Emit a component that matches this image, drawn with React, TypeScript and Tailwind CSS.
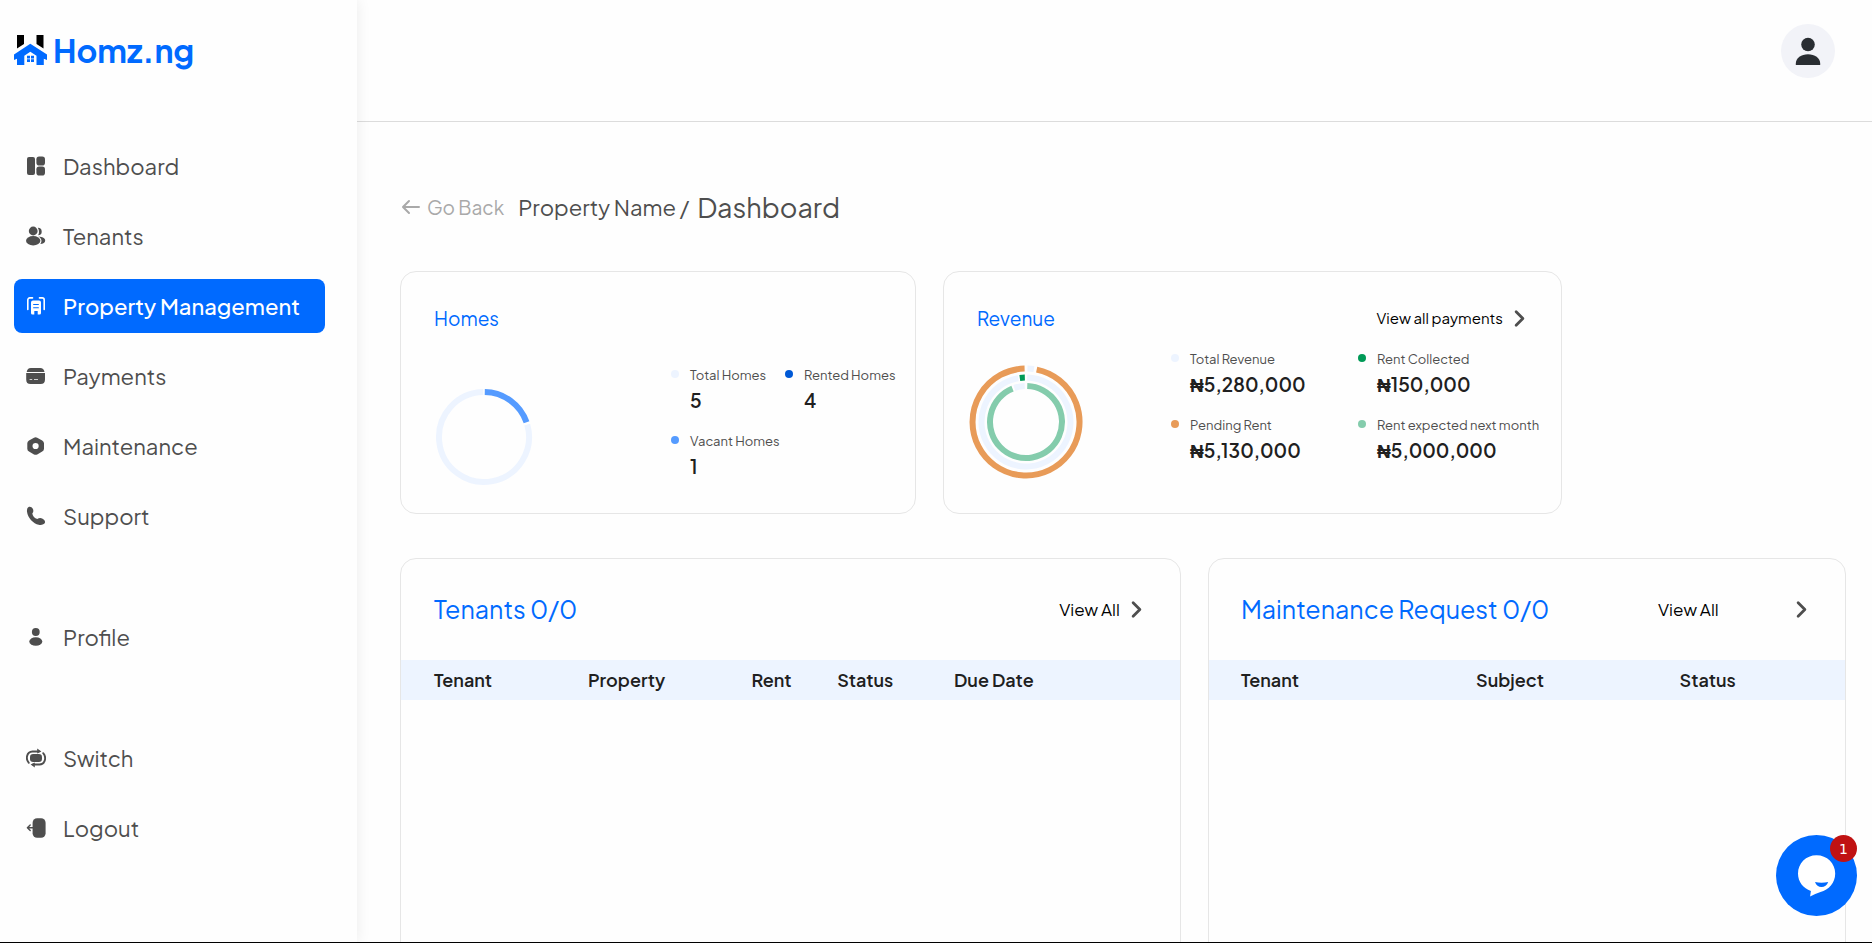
import React from 'react';
import { ChevronRight } from 'lucide-react';

type NavItem = { label: string; icon: React.ReactNode; active?: boolean };

const Icon: React.FC<{ children: React.ReactNode }> = ({ children }) => (
  <svg width="20" height="20" viewBox="0 0 20 20" fill="currentColor" aria-hidden="true" className="shrink-0">
    {children}
  </svg>
);

const mainNav: NavItem[] = [
  {
    label: 'Dashboard',
    icon: (
      <Icon>
        <rect x="1" y="1" width="8" height="18" rx="2" />
        <rect x="10.4" y="0.5" width="8.6" height="9" rx="2.8" />
        <rect x="10.4" y="10.5" width="8.6" height="9" rx="2.8" />
      </Icon>
    ),
  },
  {
    label: 'Tenants',
    icon: (
      <Icon>
        <circle cx="7.2" cy="5" r="4.4" />
        <ellipse cx="7.2" cy="14.7" rx="7.2" ry="4.7" />
        <path d="M11.8 1.8a3.7 3.7 0 1 1 .3 7.5c1.2-1.5 1.4-5-.3-7.5zM12.5 10.5c4 .2 6.700 1.700 6.700 3.900 0 2-2 3.400-5 3.600 2-2 1.800-5.500-1.700-7.500z" />
      </Icon>
    ),
  },
  {
    label: 'Property Management',
    active: true,
    icon: (
      <Icon>
        <path d="M6.500 1.900H3.800a2 2 0 0 0-2 2v9.600M13.500 1.900h2.700a2 2 0 0 1 2 2v9.600" fill="none" stroke="currentColor" strokeWidth="1.600" strokeLinecap="round" />
        <path fillRule="evenodd" d="M7 4.500h6a2 2 0 0 1 2 2V17a1.500 1.500 0 0 1-1.500 1.500h-1.800V15H8.300v3.500H6.500A1.500 1.500 0 0 1 5 17V6.500a2 2 0 0 1 2-2zM7.200 8v1.100h5.600V8zM7.200 11.200v1.100h5.600v-1.100z" />
      </Icon>
    ),
  },
  {
    label: 'Payments',
    icon: (
      <Icon>
        <path d="M4.800 2h9.400c2.400 0 3.800 1.300 4.300 3.900H.7C1.100 3.300 2.500 2 4.800 2z" />
        <path fillRule="evenodd" d="M.2 6.900h18.800v6.600c0 3-1.400 4.500-4.400 4.500h-10c-3 0-4.400-1.500-4.400-4.500zM3.600 13v.8h2.600V13zM8 13v.8h4V13z" />
      </Icon>
    ),
  },
  {
    label: 'Maintenance',
    icon: (
      <Icon>
        <path fillRule="evenodd" d="M8 1.700a3.300 3.300 0 0 1 3.200 0l5 2.800A3.300 3.300 0 0 1 18 7.300v5.500a3.300 3.300 0 0 1-1.800 2.800l-5 2.800a3.300 3.300 0 0 1-3.200 0l-5-2.800a3.300 3.300 0 0 1-1.700-2.800V7.300A3.300 3.300 0 0 1 3 4.500zM9.600 6.900a3.100 3.100 0 1 0 0 6.200 3.100 3.100 0 0 0 0-6.200z" />
      </Icon>
    ),
  },
  {
    label: 'Support',
    icon: (
      <Icon>
        <path d="M2.300 1.200c1.600-.9 3.600-.2 4.500 1.600.9 1.700.7 3.500-.5 4.600.3 2.300 2.400 4.900 5 5.700 1.500-1.200 3.500-1.400 5.300-.4 1.900 1 2.800 2.700 2.300 4-.8 1.700-3.300 2.600-6.200 2C7.500 17.600 1.700 11.900 1 5.700.8 3.700 1.200 1.900 2.300 1.200z" />
      </Icon>
    ),
  },
];

const profileNav: NavItem[] = [
  {
    label: 'Profile',
    icon: (
      <Icon>
        <circle cx="9.800" cy="5" r="3.900" />
        <ellipse cx="9.800" cy="14.500" rx="6.500" ry="4.300" />
      </Icon>
    ),
  },
];

const accountNav: NavItem[] = [
  {
    label: 'Switch',
    icon: (
      <Icon>
        <rect x="4" y="6" width="12" height="8" rx="3.200" />
        <path d="M2.800 14.800C-.4 11.500.2 3.700 6.500 3.500h6.300M17.200 5.200c3.200 3.300 2.600 11.100-3.700 11.300H7.200" fill="none" stroke="currentColor" strokeWidth="1.900" strokeLinecap="round" />
        <path d="M11.200.4l4.200 3.100-4.200 2zM8.800 19.600l-4.200-3.100 4.200-2z" />
      </Icon>
    ),
  },
  {
    label: 'Logout',
    icon: (
      <Icon>
        <rect x="6.600" y="0.200" width="13" height="19.600" rx="4.500" />
        <path d="M7 9.800H1.500M4.200 7L1.400 9.800l2.800 2.800" fill="none" stroke="currentColor" strokeWidth="1.400" strokeLinecap="round" strokeLinejoin="round" />
      </Icon>
    ),
  },
];

const Logo: React.FC = () => (
  <a href="#" className="flex items-center gap-1.5 text-[#006aff]">
    <svg width="33" height="31" viewBox="0 0 33 31" aria-hidden="true">
      <path d="M3 0h7v9l-7 4.500zM22.500 0h7v13.500l-7-4.500z" fill="#000" />
      <path
        fillRule="evenodd"
        fill="#006aff"
        d="M16.300 8.800L33 19.500v5.500l-3.200-1.200V30h-7.300v-9.300l-6.200-4-6 4V30H3v-6.200L0 25v-5.500z"
      />
      <path d="M13 20.800h3v2.600h-3zM17 20.800h3v2.600h-3zM13 24.300h3v2.700h-3zM17 24.300h3v2.700h-3z" fill="#006aff" />
    </svg>
    <span className="text-[32px] leading-[31px] font-bold">Homz.ng</span>
  </a>
);

const NavGroup: React.FC<{ items: NavItem[] }> = ({ items }) => (
  <ul className="flex flex-col gap-4">
    {items.map((item) => (
      <li key={item.label}>
        <a
          href="#"
          className={
            item.active
              ? 'flex h-[54px] items-center gap-[17px] rounded-lg bg-[#006aff] px-3 text-[22px] font-medium text-white'
              : 'flex h-[54px] items-center gap-[17px] rounded-lg px-3 text-[22px] text-[#4e4e4e]'
          }
        >
          {item.icon}
          {item.label}
        </a>
      </li>
    ))}
  </ul>
);

// Ring segment, angles are clockwise degrees from the top
const Arc: React.FC<{ c: number; r: number; from: number; to: number; color: string }> = ({ c, r, from, to, color }) => {
  const point = (deg: number) => {
    const a = ((deg - 90) * Math.PI) / 180;
    return `${(c + r * Math.cos(a)).toFixed(2)} ${(c + r * Math.sin(a)).toFixed(2)}`;
  };
  return (
    <path
      d={`M${point(from)}A${r} ${r} 0 ${to - from > 180 ? 1 : 0} 1 ${point(to)}`}
      fill="none"
      stroke={color}
      strokeWidth="6"
    />
  );
};

const Stat: React.FC<{ label: string; value: string; dot: string; naira?: boolean }> = ({ label, value, dot, naira }) => (
  <div className="flex gap-[11px]">
    <span className={`mt-1 h-2 w-2 shrink-0 rounded-full ${dot}`}></span>
    <dl>
      <dt className="text-[13px] leading-[18px] whitespace-nowrap text-[#4e4e4e]">{label}</dt>
      <dd className="mt-0.5 text-[19px] leading-7 font-semibold text-[#202020]">
        {naira && <span className="font-['Liberation_Sans',sans-serif] leading-none font-bold">₦</span>}
        {value}
      </dd>
    </dl>
  </div>
);

const headCell = 'p-0 text-left font-semibold';

const App: React.FC = () => {
  return (
    <div className="flex h-screen overflow-hidden border-b border-black bg-[#fefefe] font-['Plus_Jakarta_Sans','Inter',sans-serif]">
      <aside className="z-10 w-[357px] shrink-0 pt-[35px] pr-8 pl-[14px] shadow-[0_0_14px_rgba(0,0,0,0.08)]">
        <Logo />
        <nav className="mt-[73px] flex flex-col gap-[67px]">
          <NavGroup items={mainNav} />
          <NavGroup items={profileNav} />
          <NavGroup items={accountNav} />
        </nav>
      </aside>

      <div className="flex min-w-0 flex-1 flex-col">
        <header className="flex h-[122px] shrink-0 justify-end border-b border-[#dcdcdc] pt-6 pr-[37px]">
          <button type="button" aria-label="Account" className="h-[54px] w-[54px] rounded-full bg-[#f2f3f8]">
            <svg width="54" height="54" viewBox="0 0 54 54" fill="#292d32" aria-hidden="true">
              <circle cx="27" cy="20.500" r="6.800" />
              <path d="M14.800 41v-1.500c0-5.500 5.500-9.300 12.200-9.300s12.200 3.800 12.200 9.300V41z" />
            </svg>
          </button>
        </header>

        <main className="flex min-h-0 flex-1 flex-col pt-[63px] pr-[26px] pl-[43px]">
          <div className="flex h-11 shrink-0 items-center text-[#4e4e4e]">
            <a href="#" className="flex items-center gap-[7px] text-[19px] text-[#a9a9a9]">
              <svg width="20" height="16" viewBox="0 0 20 16" fill="none" stroke="currentColor" strokeWidth="2" strokeLinecap="round" strokeLinejoin="round" aria-hidden="true">
                <path d="M19 8H3.500M9 2L3 8l6 6" />
              </svg>
              Go Back
            </a>
            <span className="ml-[14px] text-[22px]">Property Name /</span>
            <h1 className="ml-2 text-[27px]">Dashboard</h1>
          </div>

          <div className="mt-[42px] flex shrink-0 gap-[27px]">
            <section className="h-[243px] w-[516px] rounded-2xl border border-[#e6e6e6] pt-8 pl-[33px]">
              <h2 className="text-[19px] leading-7 text-[#006aff]">Homes</h2>
              <div className="flex gap-[137px]">
                <svg width="100" height="100" viewBox="0 0 100 100" className="mt-[55px] shrink-0" role="img" aria-label="Homes">
                  <Arc c={50} r={45} from={1} to={71} color="#559bff" />
                  <Arc c={50} r={45} from={74} to={359} color="#edf4ff" />
                </svg>
                <div className="mt-[34px] grid grid-cols-[114px_max-content] content-start gap-y-[18px]">
                  <Stat label="Total Homes" value="5" dot="bg-[#edf4ff]" />
                  <Stat label="Rented Homes" value="4" dot="bg-[#0059d6]" />
                  <Stat label="Vacant Homes" value="1" dot="bg-[#559bff]" />
                </div>
              </div>
            </section>

            <section className="h-[243px] w-[619px] rounded-2xl border border-[#e6e6e6] pt-8 pr-7 pl-[25px]">
              <div className="flex items-center justify-between pl-2">
                <h2 className="text-[19px] leading-7 text-[#006aff]">Revenue</h2>
                <a href="#" className="flex items-center gap-[3px] text-[15px] text-black">
                  View all payments
                  <ChevronRight size={27} className="text-[#4e4e4e]" strokeWidth={2.5} />
                </a>
              </div>
              <div className="flex gap-[88px]">
                <svg width="114" height="114" viewBox="0 0 114 114" className="mt-[33px] shrink-0" role="img" aria-label="Revenue">
                  <Arc c={57} r={53.5} from={1.5} to={8.5} color="#edf4ff" />
                  <Arc c={57} r={53.5} from={11.5} to={358.5} color="#e89b58" />
                  <Arc c={57} r={44.5} from={1.5} to={350} color="#edf4ff" />
                  <Arc c={57} r={44.5} from={352} to={358.5} color="#009a57" />
                  <Arc c={57} r={36} from={2} to={338} color="#84ccac" />
                  <Arc c={57} r={36} from={341} to={358} color="#edf4ff" />
                </svg>
                <div className="mt-[18px] grid grid-cols-[187px_max-content] content-start gap-y-[18px]">
                  <Stat label="Total Revenue" value="5,280,000" dot="bg-[#edf4ff]" naira />
                  <Stat label="Rent Collected" value="150,000" dot="bg-[#009a57]" naira />
                  <Stat label="Pending Rent" value="5,130,000" dot="bg-[#e89b58]" naira />
                  <Stat label="Rent expected next month" value="5,000,000" dot="bg-[#84ccac]" naira />
                </div>
              </div>
            </section>
          </div>

          <div className="mt-11 flex min-h-[600px] shrink-0 gap-[27px]">
            <section className="flex-[780] rounded-2xl border border-[#e6e6e6]">
              <div className="flex h-[101px] items-center justify-between pr-[30px] pl-[33px]">
                <h2 className="text-[25px] text-[#006aff]">Tenants 0/0</h2>
                <a href="#" className="flex items-center gap-[3px] text-[17px] text-black">
                  View All
                  <ChevronRight size={27} className="text-[#4e4e4e]" strokeWidth={2.5} />
                </a>
              </div>
              <table className="w-full table-fixed text-lg text-[#202020]">
                <thead>
                  <tr className="h-10 bg-[#edf4ff]">
                    <th className={`${headCell} w-[24%] pl-[33px]`}>Tenant</th>
                    <th className={`${headCell} w-[21%]`}>Property</th>
                    <th className={`${headCell} w-[11%]`}>Rent</th>
                    <th className={`${headCell} w-[15%]`}>Status</th>
                    <th className={headCell}>Due Date</th>
                  </tr>
                </thead>
              </table>
            </section>

            <section className="flex-[637] rounded-2xl border border-[#e6e6e6]">
              <div className="flex h-[101px] items-center justify-between pr-[30px] pl-8">
                <h2 className="text-[25px] text-[#006aff]">Maintenance Request 0/0</h2>
                <a href="#" className="flex w-[157px] items-center justify-between text-[17px] text-black">
                  View All
                  <ChevronRight size={27} className="text-[#4e4e4e]" strokeWidth={2.5} />
                </a>
              </div>
              <table className="w-full table-fixed text-lg text-[#202020]">
                <thead>
                  <tr className="h-10 bg-[#edf4ff]">
                    <th className={`${headCell} w-[42%] pl-8`}>Tenant</th>
                    <th className={`${headCell} w-[32%]`}>Subject</th>
                    <th className={headCell}>Status</th>
                  </tr>
                </thead>
              </table>
            </section>
          </div>
        </main>
      </div>

      <button type="button" aria-label="Open chat" className="fixed right-[15px] bottom-[27px] z-20 h-[81px] w-[81px] rounded-full bg-[#006aff]">
        <svg width="81" height="81" viewBox="0 0 81 81" aria-hidden="true">
          <path d="M40.500 20.200c10.600 0 18.700 8 18.700 18.400 0 9.400-6.500 16.400-14.700 18.500-3.500 1.200-7 2.600-10.400 4.300l.8-5.500C27.300 53.500 22 47 22 38.600c0-10.400 8-18.400 18.500-18.400z" fill="#fff" />
          <path d="M39 47c4 .9 9 .9 13.200 0-1.200 3.400-3.700 5-6.700 5S40.200 50.400 39 47z" fill="#006aff" />
        </svg>
        <span className="absolute top-0 right-0 flex h-[27px] w-[27px] items-center justify-center rounded-full bg-[#c01212] font-['DejaVu_Sans',sans-serif] text-sm text-white">1</span>
      </button>
    </div>
  );
};

export default App;
